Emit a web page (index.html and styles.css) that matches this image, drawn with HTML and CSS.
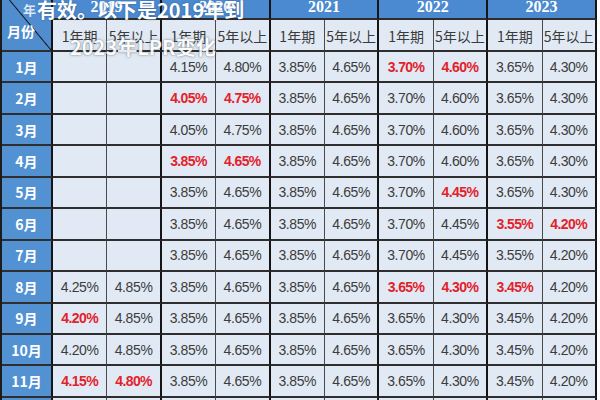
FILE: index.html
```html
<!DOCTYPE html>
<html lang="zh">
<head>
<meta charset="utf-8">
<title>LPR</title>
<link rel="stylesheet" href="styles.css">
</head>
<body>
<div class="page">
  <div class="grid">
    <div class="corner"><span class="c-year">年</span><span class="c-month">月份</span></div>
    <div class="yr g">2019</div>
    <div class="yr g">2020</div>
    <div class="yr g">2021</div>
    <div class="yr g">2022</div>
    <div class="yr g">2023</div>

    <div class="sub">1年期</div><div class="sub g">5年以上</div>
    <div class="sub">1年期</div><div class="sub g">5年以上</div>
    <div class="sub">1年期</div><div class="sub g">5年以上</div>
    <div class="sub">1年期</div><div class="sub g">5年以上</div>
    <div class="sub">1年期</div><div class="sub g">5年以上</div>

    <div class="m">1月</div><div class="d"></div><div class="d g"></div><div class="d">4.15%</div><div class="d g">4.80%</div><div class="d">3.85%</div><div class="d g">4.65%</div><div class="d r">3.70%</div><div class="d g r">4.60%</div><div class="d">3.65%</div><div class="d g">4.30%</div>
    <div class="m">2月</div><div class="d"></div><div class="d g"></div><div class="d r">4.05%</div><div class="d g r">4.75%</div><div class="d">3.85%</div><div class="d g">4.65%</div><div class="d">3.70%</div><div class="d g">4.60%</div><div class="d">3.65%</div><div class="d g">4.30%</div>
    <div class="m">3月</div><div class="d"></div><div class="d g"></div><div class="d">4.05%</div><div class="d g">4.75%</div><div class="d">3.85%</div><div class="d g">4.65%</div><div class="d">3.70%</div><div class="d g">4.60%</div><div class="d">3.65%</div><div class="d g">4.30%</div>
    <div class="m">4月</div><div class="d"></div><div class="d g"></div><div class="d r">3.85%</div><div class="d g r">4.65%</div><div class="d">3.85%</div><div class="d g">4.65%</div><div class="d">3.70%</div><div class="d g">4.60%</div><div class="d">3.65%</div><div class="d g">4.30%</div>
    <div class="m">5月</div><div class="d"></div><div class="d g"></div><div class="d">3.85%</div><div class="d g">4.65%</div><div class="d">3.85%</div><div class="d g">4.65%</div><div class="d">3.70%</div><div class="d g r">4.45%</div><div class="d">3.65%</div><div class="d g">4.30%</div>
    <div class="m">6月</div><div class="d"></div><div class="d g"></div><div class="d">3.85%</div><div class="d g">4.65%</div><div class="d">3.85%</div><div class="d g">4.65%</div><div class="d">3.70%</div><div class="d g">4.45%</div><div class="d r">3.55%</div><div class="d g r">4.20%</div>
    <div class="m">7月</div><div class="d"></div><div class="d g"></div><div class="d">3.85%</div><div class="d g">4.65%</div><div class="d">3.85%</div><div class="d g">4.65%</div><div class="d">3.70%</div><div class="d g">4.45%</div><div class="d">3.55%</div><div class="d g">4.20%</div>
    <div class="m">8月</div><div class="d">4.25%</div><div class="d g">4.85%</div><div class="d">3.85%</div><div class="d g">4.65%</div><div class="d">3.85%</div><div class="d g">4.65%</div><div class="d r">3.65%</div><div class="d g r">4.30%</div><div class="d r">3.45%</div><div class="d g">4.20%</div>
    <div class="m">9月</div><div class="d r">4.20%</div><div class="d g">4.85%</div><div class="d">3.85%</div><div class="d g">4.65%</div><div class="d">3.85%</div><div class="d g">4.65%</div><div class="d">3.65%</div><div class="d g">4.30%</div><div class="d">3.45%</div><div class="d g">4.20%</div>
    <div class="m">10月</div><div class="d">4.20%</div><div class="d g">4.85%</div><div class="d">3.85%</div><div class="d g">4.65%</div><div class="d">3.85%</div><div class="d g">4.65%</div><div class="d">3.65%</div><div class="d g">4.30%</div><div class="d">3.45%</div><div class="d g">4.20%</div>
    <div class="m">11月</div><div class="d r">4.15%</div><div class="d g r">4.80%</div><div class="d">3.85%</div><div class="d g">4.65%</div><div class="d">3.85%</div><div class="d g">4.65%</div><div class="d">3.65%</div><div class="d g">4.30%</div><div class="d">3.45%</div><div class="d g">4.20%</div>
    <div class="m">12月</div><div class="d">4.15%</div><div class="d g">4.80%</div><div class="d">3.85%</div><div class="d g">4.65%</div><div class="d">3.80%</div><div class="d g">4.65%</div><div class="d">3.65%</div><div class="d g">4.30%</div><div class="d">3.45%</div><div class="d g">4.20%</div>
  </div>
  <div class="caption">
    <div class="cap1">有效。以下是2019年到</div>
    <div class="cap2">2023年LPR变化</div>
  </div>
</div>
</body>
</html>
```

FILE: styles.css
```css
html, body {
  margin: 0;
  padding: 0;
  background: #ffffff;
  overflow: hidden;
  width: 600px;
  height: 400px;
}

.page {
  position: relative;
  width: 600px;
  height: 400px;
  overflow: hidden;
}

.grid {
  display: grid;
  grid-template-columns: 51px repeat(10, 54.4px);
  grid-template-rows: 29px 32px repeat(12, 31.45px);
  margin-top: -9px;
  width: max-content;
  border-left: 2px solid #1c1c1c;
  font-family: "Liberation Sans", Arial, sans-serif;
}

.grid > div {
  box-sizing: border-box;
  border-bottom: 2px solid #2e2e2e;
  border-right: 1px solid #4a4a4a;
  display: flex;
  align-items: center;
  justify-content: center;
}

.grid > div.g,
.grid > .corner,
.grid > .m {
  border-right: 2px solid #151515;
}

.corner {
  grid-row: span 2;
  background-color: #4f8dcf;
  background-image: linear-gradient(to top right, transparent calc(50% - 1px), #141414 50%, transparent calc(50% + 1px));
  flex-direction: column;
  align-items: stretch !important;
  justify-content: flex-start !important;
  padding: 12px 0 0 0;
  color: #ffffff;
  font-family: "Noto Sans CJK SC", sans-serif;
  font-weight: 700;
  font-size: 13px;
  line-height: 13px;
}

.c-year {
  align-self: flex-start;
  margin-left: 21px;
  opacity: 0.8;
}

.c-month {
  margin-top: 9px;
  margin-left: 5px;
  font-size: 14px;
}

.yr {
  grid-column: span 2;
  background: #4b8ad0;
  color: #ffffff;
  font-family: "Liberation Serif", serif;
  font-weight: 700;
  font-size: 16px;
  padding-top: 4px;
}

.sub {
  background: #e1eaf4;
  color: #3a3a3a;
  font-family: "Noto Sans CJK SC", sans-serif;
  font-size: 14px;
  padding-top: 2px;
}

.m {
  background: #5291d2;
  color: #ffffff;
  font-family: "Noto Sans CJK SC", sans-serif;
  font-weight: 700;
  font-size: 14px;
}

.d {
  background: #e1eaf4;
  color: #3c3c3c;
  font-size: 14px;
  letter-spacing: -0.4px;
}

.d.r {
  color: #e2222b;
  font-weight: 700;
  letter-spacing: -0.6px;
}

.caption {
  position: absolute;
  left: 0;
  top: 0;
  font-family: "Noto Sans CJK SC", sans-serif;
  font-weight: 700;
  font-size: 20px;
  line-height: 20px;
  color: #ffffff;
}

.cap1 {
  margin-left: 37px;
  text-shadow: 0 0 2px rgba(20, 40, 80, 0.5);
}

.cap2 {
  margin-left: 70px;
  margin-top: 17px;
  opacity: 0.9;
  text-shadow: 0 0 1px rgba(60, 70, 90, 0.7), 0 0 3px rgba(60, 70, 90, 0.5);
}
```
